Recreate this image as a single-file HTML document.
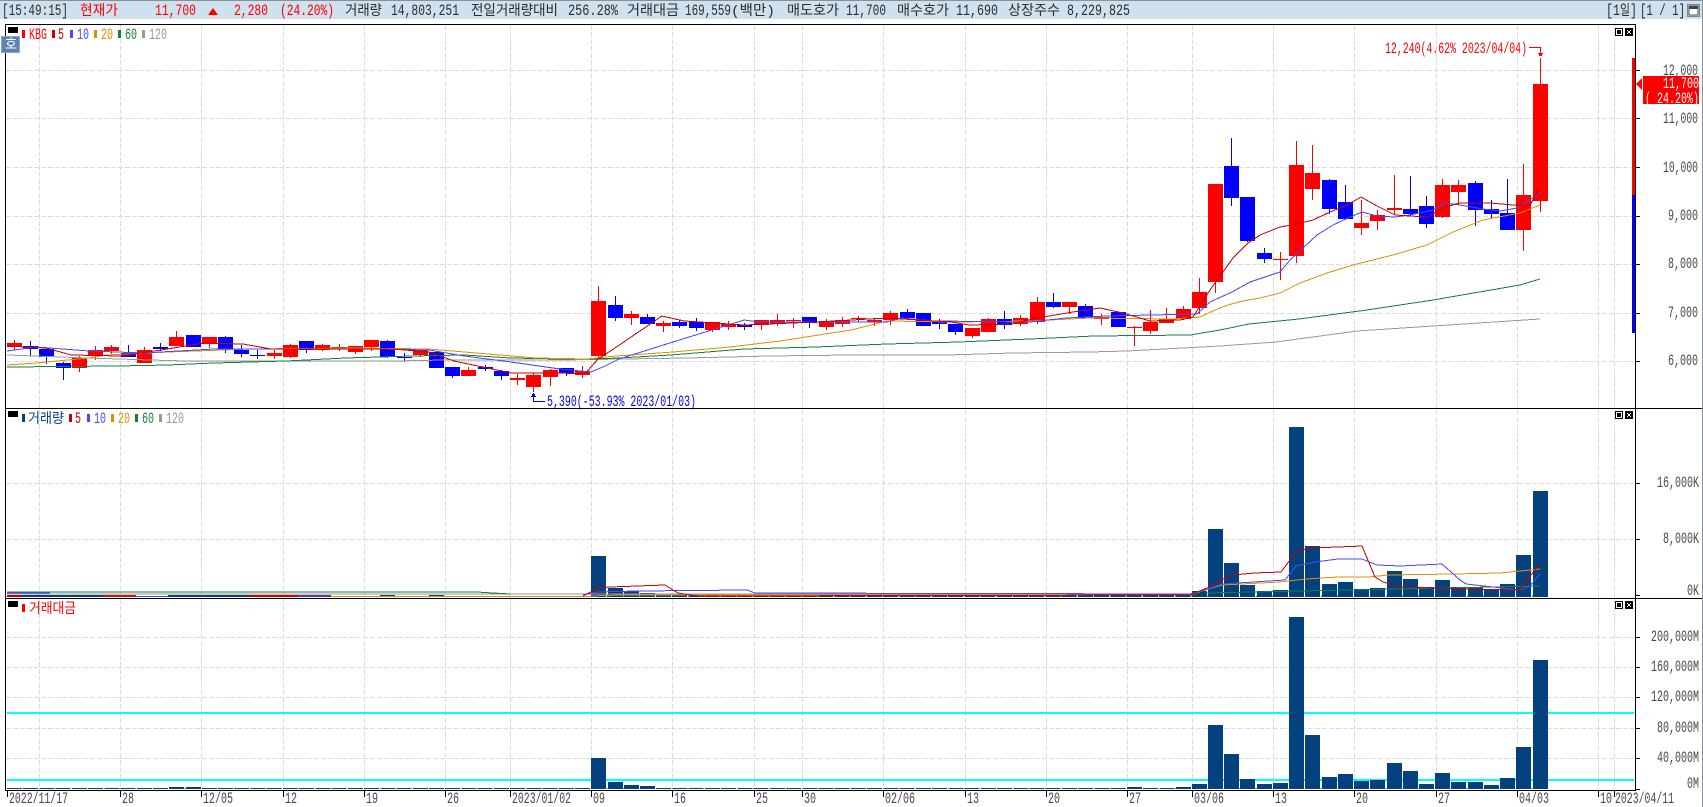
<!DOCTYPE html>
<html lang="ko"><head><meta charset="utf-8"><title>KBG</title>
<style>
html,body{margin:0;padding:0;background:#fff;width:1703px;height:807px;overflow:hidden}
svg{display:block}
text{font-family:"Liberation Mono","Noto Sans CJK KR",monospace;font-size:16px;fill:#444}
.k{font-family:"Liberation Sans","Noto Sans CJK KR",sans-serif;font-size:14px}
.h{font-size:16px;fill:#2c2c2c}
.a{fill:#484848}
.r{fill:#f00}
.g line{stroke:#dcdcdc;stroke-width:1;stroke-dasharray:5 2}
.m{fill:none;stroke-width:1}
</style></head><body>
<svg width="1703" height="807" viewBox="0 0 1703 807" shape-rendering="crispEdges">
<rect width="1703" height="807" fill="#fff"/>
<rect width="1703" height="19" fill="#cfe0ee"/>
<rect width="1703" height="1" fill="#87919b"/>
<rect x="1702" width="1" height="807" fill="#87919b"/>

<!-- grid -->
<g class="g">
<line x1="39.5" x2="39.5" y1="25" y2="790"/><line x1="120.5" x2="120.5" y1="25" y2="790"/><line x1="201.5" x2="201.5" y1="25" y2="790"/><line x1="283.5" x2="283.5" y1="25" y2="790"/><line x1="364.5" x2="364.5" y1="25" y2="790"/><line x1="445.5" x2="445.5" y1="25" y2="790"/><line x1="510.5" x2="510.5" y1="25" y2="790"/><line x1="591.5" x2="591.5" y1="25" y2="790"/><line x1="672.5" x2="672.5" y1="25" y2="790"/><line x1="754.5" x2="754.5" y1="25" y2="790"/><line x1="802.5" x2="802.5" y1="25" y2="790"/><line x1="883.5" x2="883.5" y1="25" y2="790"/><line x1="965.5" x2="965.5" y1="25" y2="790"/><line x1="1046.5" x2="1046.5" y1="25" y2="790"/><line x1="1127.5" x2="1127.5" y1="25" y2="790"/><line x1="1192.5" x2="1192.5" y1="25" y2="790"/><line x1="1273.5" x2="1273.5" y1="25" y2="790"/><line x1="1354.5" x2="1354.5" y1="25" y2="790"/><line x1="1436.5" x2="1436.5" y1="25" y2="790"/><line x1="1517.5" x2="1517.5" y1="25" y2="790"/><line x1="1598.5" x2="1598.5" y1="25" y2="790"/><line x1="1614.5" x2="1614.5" y1="25" y2="790"/>
<line x1="6" x2="1635" y1="70.5" y2="70.5"/><line x1="6" x2="1635" y1="118.5" y2="118.5"/><line x1="6" x2="1635" y1="167.5" y2="167.5"/><line x1="6" x2="1635" y1="216.5" y2="216.5"/><line x1="6" x2="1635" y1="264.5" y2="264.5"/><line x1="6" x2="1635" y1="313.5" y2="313.5"/><line x1="6" x2="1635" y1="361.5" y2="361.5"/>
<line x1="6" x2="1635" y1="483.5" y2="483.5"/><line x1="6" x2="1635" y1="539.5" y2="539.5"/>
<line x1="6" x2="1635" y1="637.5" y2="637.5"/><line x1="6" x2="1635" y1="667.5" y2="667.5"/><line x1="6" x2="1635" y1="697.5" y2="697.5"/><line x1="6" x2="1635" y1="728.5" y2="728.5"/><line x1="6" x2="1635" y1="758.5" y2="758.5"/>
</g>

<!-- candles red -->
<path fill="#f00" d="M7 343h15v4h-15zM14 340h1v10h-1zM72 358h15v10h-15zM79 356h1v16h-1zM88 350h15v5h-15zM95 346h1v14h-1zM104 347h15v4h-15zM111 345h1v9h-1zM137 350h15v13h-15zM144 347h1v16h-1zM169 337h15v9h-15zM176 331h1v15h-1zM202 337h15v7h-15zM209 337h1v11h-1zM267 353h15v3h-15zM274 350h1v9h-1zM283 345h15v12h-15zM290 344h1v14h-1zM315 345h15v5h-15zM322 344h1v7h-1zM332 347h15v2h-15zM339 344h1v7h-1zM348 346h15v6h-15zM355 346h1v8h-1zM364 340h15v7h-15zM371 340h1v11h-1zM413 350h15v5h-15zM420 350h1v7h-1zM461 370h15v6h-15zM468 367h1v9h-1zM510 378h15v2h-15zM517 374h1v11h-1zM526 375h15v12h-15zM533 373h1v19h-1zM543 370h15v7h-15zM550 369h1v17h-1zM575 371h15v4h-15zM582 366h1v12h-1zM591 301h15v55h-15zM598 286h1v74h-1zM624 314h15v4h-15zM631 311h1v14h-1zM656 323h15v3h-15zM663 321h1v11h-1zM705 322h15v8h-15zM712 322h1v10h-1zM721 324h15v3h-15zM728 321h1v9h-1zM754 320h15v5h-15zM761 320h1v10h-1zM770 320h15v4h-15zM777 314h1v12h-1zM786 320h15v1h-15zM793 318h1v10h-1zM819 321h15v6h-15zM826 319h1v11h-1zM835 320h15v4h-15zM842 317h1v10h-1zM851 318h15v1h-15zM858 316h1v6h-1zM867 320h15v2h-15zM874 318h1v8h-1zM883 313h15v7h-15zM890 311h1v14h-1zM965 328h15v8h-15zM972 328h1v10h-1zM981 319h15v13h-15zM988 318h1v14h-1zM1013 318h15v6h-15zM1020 315h1v11h-1zM1030 302h15v20h-15zM1037 297h1v27h-1zM1062 302h15v5h-15zM1069 302h1v12h-1zM1094 317h15v2h-15zM1101 314h1v11h-1zM1127 327h15v1h-15zM1134 326h1v20h-1zM1143 322h15v9h-15zM1150 310h1v24h-1zM1159 319h15v4h-15zM1166 308h1v15h-1zM1176 309h15v10h-15zM1183 306h1v14h-1zM1192 292h15v16h-15zM1199 278h1v36h-1zM1208 184h15v98h-15zM1215 184h1v109h-1zM1273 259h15v1h-15zM1280 252h1v28h-1zM1289 165h15v91h-15zM1296 141h1v122h-1zM1305 173h15v16h-15zM1312 145h1v55h-1zM1354 223h15v5h-15zM1361 200h1v35h-1zM1370 215h15v6h-15zM1377 210h1v20h-1zM1387 208h15v2h-15zM1394 175h1v40h-1zM1435 185h15v32h-15zM1442 179h1v39h-1zM1451 185h15v7h-15zM1458 180h1v25h-1zM1516 195h15v35h-15zM1523 164h1v87h-1zM1533 84h15v117h-15zM1540 58h1v154h-1z"/>
<!-- candles blue -->
<path fill="#00f" d="M23 346h15v3h-15zM30 341h1v15h-1zM39 349h15v8h-15zM46 348h1v16h-1zM56 363h15v5h-15zM63 362h1v18h-1zM121 353h15v4h-15zM128 345h1v12h-1zM153 347h15v2h-15zM160 343h1v8h-1zM186 335h15v12h-15zM218 337h15v13h-15zM225 336h1v17h-1zM234 350h15v4h-15zM241 345h1v12h-1zM250 355h15v1h-15zM257 350h1v9h-1zM299 341h15v9h-15zM306 341h1v12h-1zM380 341h15v16h-15zM387 340h1v18h-1zM397 357h15v1h-15zM404 353h1v9h-1zM429 352h15v16h-15zM445 367h15v9h-15zM452 367h1v11h-1zM478 367h15v2h-15zM485 365h1v6h-1zM494 371h15v5h-15zM501 370h1v10h-1zM559 368h15v5h-15zM566 368h1v8h-1zM608 305h15v13h-15zM615 296h1v25h-1zM640 317h15v7h-15zM647 314h1v10h-1zM672 322h15v4h-15zM679 320h1v8h-1zM689 322h15v6h-15zM696 318h1v13h-1zM737 325h15v2h-15zM744 323h1v7h-1zM802 317h15v6h-15zM809 317h1v11h-1zM900 312h15v6h-15zM907 309h1v11h-1zM916 313h15v13h-15zM932 322h15v2h-15zM939 319h1v10h-1zM948 324h15v8h-15zM955 324h1v11h-1zM997 319h15v6h-15zM1004 311h1v18h-1zM1046 302h15v5h-15zM1053 293h1v15h-1zM1078 306h15v12h-15zM1085 304h1v14h-1zM1111 312h15v15h-15zM1224 166h15v32h-15zM1231 138h1v68h-1zM1240 197h15v44h-15zM1247 197h1v45h-1zM1257 253h15v6h-15zM1264 248h1v15h-1zM1322 180h15v29h-15zM1329 179h1v35h-1zM1338 202h15v17h-15zM1345 185h1v34h-1zM1403 209h15v5h-15zM1410 176h1v40h-1zM1419 206h15v18h-15zM1426 196h1v32h-1zM1468 183h15v27h-15zM1475 181h1v45h-1zM1484 209h15v5h-15zM1491 200h1v19h-1zM1500 213h15v17h-15zM1507 179h1v51h-1z"/>

<!-- moving averages price -->
<polyline class="m" stroke="#999" points="7,355 89,358 150,360 186,361 393,361 446,360 560,360 687,358 769,356 851,355 948,355 1012,353 1090,352 1127,351 1220,346 1276,342 1357,331 1433,326 1540,319"/>
<polyline class="m" stroke="#14803a" points="7,367 118,366 168,365 214,363 286,361 346,358 411,356 464,355 511,358 560,359 591,359 619,358 671,355 744,349 816,347 887,344 959,342 1030,339 1094,336 1190,335 1220,330 1249,324 1299,319 1367,310 1433,300 1520,285 1540,279"/>
<polyline class="m" stroke="#e09000" points="7,365 36,363 89,358 107,355 168,352 250,349 357,348 429,349 500,355 536,358 587,359 616,356 673,352 730,347 780,341 851,330 887,321 955,322 1030,321 1090,318 1173,319 1200,317 1215,310 1228,305 1243,301 1260,298 1280,293 1300,283 1327,273 1353,265 1393,255 1427,245 1453,232 1483,220 1520,213 1540,205"/>
<polyline class="m" stroke="#4848ff" points="7,351 36,347 89,351 143,353 214,349 286,349 375,349 429,350 464,356 511,362 560,369 591,372 605,366 619,359 673,342 744,320 759,322 887,322 901,318 934,321 1030,322 1066,318 1107,316 1197,314 1210,302 1232,292 1250,282 1280,272 1290,260 1303,248 1317,235 1333,225 1350,217 1362,212 1377,216 1395,217 1410,215 1433,210 1445,203 1460,205 1483,209 1500,211 1517,208 1540,193"/>
<polyline class="m" stroke="#c80000" points="7,346 46,348 71,355 121,356 161,350 204,343 243,344 271,349 393,349 429,352 454,361 511,373 560,373 585,374 598,359 612,350 662,316 684,321 744,325 816,322 887,318 951,322 969,325 1012,324 1037,318 1073,312 1100,308 1123,313 1150,321 1180,320 1193,317 1210,290 1233,258 1248,243 1260,235 1280,227 1297,224 1313,220 1330,212 1347,205 1361,197 1377,206 1395,215 1410,216 1428,217 1443,208 1459,203 1490,203 1513,205 1530,205 1540,187"/>

<!-- price extreme labels -->
<text x="1385" y="53" class="r" textLength="142" lengthAdjust="spacingAndGlyphs">12,240(4.62% 2023/04/04)</text>
<rect x="1529" y="47" width="12" height="1" fill="#f00"/>
<rect x="1540" y="47" width="1" height="9" fill="#f00"/>
<rect x="1538" y="53" width="5" height="1" fill="#f00"/>
<rect x="1539" y="54" width="3" height="2" fill="#f00"/>
<text x="547" y="406" style="fill:#00f" textLength="149" lengthAdjust="spacingAndGlyphs">5,390(-53.93% 2023/01/03)</text>
<rect x="533" y="393" width="1" height="9" fill="#00f"/>
<rect x="533" y="401" width="12" height="1" fill="#00f"/>
<rect x="531" y="396" width="5" height="1" fill="#00f"/>
<rect x="532" y="394" width="3" height="2" fill="#00f"/>

<!-- volume panel -->
<rect x="7" y="595" width="15" height="2" fill="#c80000"/>
<rect x="22" y="595" width="81" height="2" fill="#03427f"/>
<rect x="103" y="595" width="33" height="2" fill="#d01010"/>
<rect x="136" y="596" width="32" height="1" fill="#4848ff"/>
<rect x="168" y="595" width="81" height="2" fill="#03427f"/>
<rect x="249" y="595" width="49" height="2" fill="#c80000"/>
<rect x="298" y="595" width="33" height="2" fill="#5a3a9a"/>
<rect x="331" y="596" width="259" height="1" fill="#e09000"/>
<rect x="380" y="595" width="15" height="1" fill="#03427f"/>
<rect x="429" y="595" width="15" height="1" fill="#03427f"/>
<line x1="591" x2="1548" y1="596" y2="596" stroke="#03427f" stroke-width="2" stroke-dasharray="15 1.23"/>
<path fill="#03427f" d="M591 556h15v41h-15zM608 588h15v9h-15zM624 591h15v6h-15zM640 593h15v4h-15zM689 594h15v3h-15zM1192 591h15v6h-15zM1208 529h15v68h-15zM1224 563h15v34h-15zM1240 585h15v12h-15zM1257 591h15v6h-15zM1273 590h15v7h-15zM1289 427h15v170h-15zM1305 546h15v51h-15zM1322 584h15v13h-15zM1338 582h15v15h-15zM1354 589h15v8h-15zM1370 588h15v9h-15zM1387 571h15v26h-15zM1403 579h15v18h-15zM1419 587h15v10h-15zM1435 580h15v17h-15zM1451 587h15v10h-15zM1468 587h15v10h-15zM1484 589h15v8h-15zM1500 584h15v13h-15zM1516 555h15v42h-15zM1533 491h15v106h-15z"/>
<polyline class="m" stroke="#999" points="7,594 1190,594"/>
<polyline class="m" stroke="#14803a" points="7,592 477,592 493,593 510,594"/>
<polyline class="m" stroke="#4848ff" points="7,593 50,593"/>
<polyline class="m" stroke="#14803a" points="1205,593 1540,586"/>
<polyline class="m" stroke="#e09000" points="590,596 620,595 1190,595 1205,590 1222,585 1280,582 1306,579 1338,577 1369,577 1388,575 1454,574 1500,573 1540,569"/>
<polyline class="m" stroke="#4848ff" points="583,595 597,592 638,591 747,590 755,593 1190,594 1205,590 1222,584 1285,580 1296,566 1315,562 1338,559 1362,559 1377,565 1400,566 1442,564 1460,580 1466,584 1520,590 1530,586 1540,574"/>
<polyline class="m" stroke="#c80000" points="583,596 598,588 610,587 665,585 673,590 678,593 690,595 700,596 1190,595 1207,588 1221,580 1233,575 1254,573 1281,572 1296,552 1310,548 1338,547 1362,546 1375,577 1383,582 1400,587 1510,590 1520,590 1527,580 1540,564"/>

<!-- value panel -->
<rect x="7" y="712" width="1627" height="2" fill="#0ff"/>
<rect x="7" y="779" width="1627" height="2" fill="#0ff"/>
<line x1="7" x2="1548" y1="788.5" y2="788.5" stroke="#03427f" stroke-width="1" stroke-dasharray="15 1.23"/>
<path fill="#03427f" d="M169 787h15v2h-15zM186 787h15v2h-15zM591 758h15v31h-15zM608 782h15v7h-15zM624 785h15v4h-15zM640 786h15v3h-15zM1127 787h15v2h-15zM1176 787h15v2h-15zM1192 784h15v5h-15zM1208 725h15v64h-15zM1224 754h15v35h-15zM1240 779h15v10h-15zM1257 784h15v5h-15zM1273 783h15v6h-15zM1289 617h15v172h-15zM1305 735h15v54h-15zM1322 777h15v12h-15zM1338 774h15v15h-15zM1354 781h15v8h-15zM1370 780h15v9h-15zM1387 763h15v26h-15zM1403 771h15v18h-15zM1419 784h15v5h-15zM1435 773h15v16h-15zM1451 782h15v7h-15zM1468 782h15v7h-15zM1484 785h15v4h-15zM1500 778h15v11h-15zM1516 747h15v42h-15zM1533 660h15v129h-15z"/>

<!-- frame -->
<g fill="#000">
<rect x="5" y="24" width="1631" height="1"/>
<rect x="5" y="24" width="1" height="767"/>
<rect x="1635" y="24" width="1" height="767"/>
<rect x="5" y="408" width="1697" height="1"/>
<rect x="5" y="598" width="1697" height="1"/>
<rect x="5" y="790" width="1631" height="1"/>
<path d="M1635 70h5v1h-5zM1635 118h5v1h-5zM1635 167h5v1h-5zM1635 216h5v1h-5zM1635 264h5v1h-5zM1635 313h5v1h-5zM1635 361h5v1h-5zM1635 483h5v1h-5zM1635 539h5v1h-5zM1635 595h5v1h-5zM1635 637h5v1h-5zM1635 667h5v1h-5zM1635 697h5v1h-5zM1635 728h5v1h-5zM1635 758h5v1h-5zM1635 789h5v1h-5z"/>
<path d="M7 791h1v6h-1zM120 791h1v6h-1zM201 791h1v6h-1zM283 791h1v6h-1zM364 791h1v6h-1zM445 791h1v6h-1zM510 791h1v6h-1zM591 791h1v6h-1zM672 791h1v6h-1zM754 791h1v6h-1zM802 791h1v6h-1zM883 791h1v6h-1zM965 791h1v6h-1zM1046 791h1v6h-1zM1127 791h1v6h-1zM1192 791h1v6h-1zM1273 791h1v6h-1zM1354 791h1v6h-1zM1436 791h1v6h-1zM1517 791h1v6h-1zM1598 791h1v6h-1zM1614 791h1v6h-1z"/>
<rect x="8" y="27" width="10" height="6"/><rect x="8" y="411" width="10" height="6"/><rect x="8" y="601" width="10" height="6"/>
<path d="M1615 28h8v8h-8zM1625 28h8v8h-8zM1615 411h8v8h-8zM1625 411h8v8h-8zM1615 601h8v8h-8zM1625 601h8v8h-8z"/>
</g>
<path fill="#fff" d="M1616 29h6v1h-6zM1616 34h6v1h-6zM1616 29h1v6h-1zM1621 29h1v6h-1zM1616 412h6v1h-6zM1616 417h6v1h-6zM1616 412h1v6h-1zM1621 412h1v6h-1zM1616 602h6v1h-6zM1616 607h6v1h-6zM1616 602h1v6h-1zM1621 602h1v6h-1zM1627 30h1v1h-1zM1630 30h1v1h-1zM1628 31h2v2h-2zM1627 33h1v1h-1zM1630 33h1v1h-1zM1627 413h1v1h-1zM1630 413h1v1h-1zM1628 414h2v2h-2zM1627 416h1v1h-1zM1630 416h1v1h-1zM1627 603h1v1h-1zM1630 603h1v1h-1zM1628 604h2v2h-2zM1627 606h1v1h-1zM1630 606h1v1h-1z"/>

<!-- right side indicator -->
<rect x="1632" y="58" width="3" height="137" fill="#f00"/>
<rect x="1632" y="195" width="3" height="138" fill="#00f"/>
<path d="M1636 84l6-6v12z" fill="#f00" shape-rendering="auto"/>
<rect x="1643" y="76" width="56" height="28" fill="#f00"/>
<text x="1663" y="88" style="fill:#fff" textLength="36" lengthAdjust="spacingAndGlyphs">11,700</text>
<text x="1645" y="103" style="fill:#fff" textLength="54" lengthAdjust="spacingAndGlyphs">( 24.20%)</text>

<!-- axis labels -->
<text class="a" x="1663" y="75" textLength="35" lengthAdjust="spacingAndGlyphs">12,000</text>
<text class="a" x="1663" y="123" textLength="35" lengthAdjust="spacingAndGlyphs">11,000</text>
<text class="a" x="1663" y="172" textLength="35" lengthAdjust="spacingAndGlyphs">10,000</text>
<text class="a" x="1668" y="220" textLength="30" lengthAdjust="spacingAndGlyphs">9,000</text>
<text class="a" x="1668" y="268" textLength="30" lengthAdjust="spacingAndGlyphs">8,000</text>
<text class="a" x="1668" y="317" textLength="30" lengthAdjust="spacingAndGlyphs">7,000</text>
<text class="a" x="1668" y="365" textLength="30" lengthAdjust="spacingAndGlyphs">6,000</text>
<text class="a" x="1657" y="487" textLength="42" lengthAdjust="spacingAndGlyphs">16,000K</text>
<text class="a" x="1663" y="543" textLength="36" lengthAdjust="spacingAndGlyphs">8,000K</text>
<text class="a" x="1687" y="595" textLength="12" lengthAdjust="spacingAndGlyphs">0K</text>
<text class="a" x="1651" y="641" textLength="48" lengthAdjust="spacingAndGlyphs">200,000M</text>
<text class="a" x="1651" y="671" textLength="48" lengthAdjust="spacingAndGlyphs">160,000M</text>
<text class="a" x="1651" y="701" textLength="48" lengthAdjust="spacingAndGlyphs">120,000M</text>
<text class="a" x="1657" y="732" textLength="42" lengthAdjust="spacingAndGlyphs">80,000M</text>
<text class="a" x="1657" y="762" textLength="42" lengthAdjust="spacingAndGlyphs">40,000M</text>
<text class="a" x="1687" y="788" textLength="12" lengthAdjust="spacingAndGlyphs">0M</text>
<text class="a" x="9" y="803" textLength="59" lengthAdjust="spacingAndGlyphs">2022/11/17</text>
<text class="a" x="122" y="803" textLength="12" lengthAdjust="spacingAndGlyphs">28</text>
<text class="a" x="203" y="803" textLength="30" lengthAdjust="spacingAndGlyphs">12/05</text>
<text class="a" x="285" y="803" textLength="12" lengthAdjust="spacingAndGlyphs">12</text>
<text class="a" x="366" y="803" textLength="12" lengthAdjust="spacingAndGlyphs">19</text>
<text class="a" x="447" y="803" textLength="12" lengthAdjust="spacingAndGlyphs">26</text>
<text class="a" x="512" y="803" textLength="59" lengthAdjust="spacingAndGlyphs">2023/01/02</text>
<text class="a" x="593" y="803" textLength="12" lengthAdjust="spacingAndGlyphs">09</text>
<text class="a" x="674" y="803" textLength="12" lengthAdjust="spacingAndGlyphs">16</text>
<text class="a" x="756" y="803" textLength="12" lengthAdjust="spacingAndGlyphs">25</text>
<text class="a" x="804" y="803" textLength="12" lengthAdjust="spacingAndGlyphs">30</text>
<text class="a" x="885" y="803" textLength="30" lengthAdjust="spacingAndGlyphs">02/06</text>
<text class="a" x="967" y="803" textLength="12" lengthAdjust="spacingAndGlyphs">13</text>
<text class="a" x="1048" y="803" textLength="12" lengthAdjust="spacingAndGlyphs">20</text>
<text class="a" x="1129" y="803" textLength="12" lengthAdjust="spacingAndGlyphs">27</text>
<text class="a" x="1194" y="803" textLength="30" lengthAdjust="spacingAndGlyphs">03/06</text>
<text class="a" x="1275" y="803" textLength="12" lengthAdjust="spacingAndGlyphs">13</text>
<text class="a" x="1356" y="803" textLength="12" lengthAdjust="spacingAndGlyphs">20</text>
<text class="a" x="1438" y="803" textLength="12" lengthAdjust="spacingAndGlyphs">27</text>
<text class="a" x="1519" y="803" textLength="30" lengthAdjust="spacingAndGlyphs">04/03</text>
<text class="a" x="1600" y="803" textLength="12" lengthAdjust="spacingAndGlyphs">10</text>
<text class="a" x="1615" y="803" textLength="59" lengthAdjust="spacingAndGlyphs">2023/04/11</text>

<!-- legends -->
<path fill="#f00" d="M22 30h3v8h-3zM22 604h3v8h-3z"/>
<rect x="52" y="30" width="3" height="8" fill="#c80000"/><rect x="70" y="30" width="3" height="8" fill="#4848ff"/><rect x="94" y="30" width="3" height="8" fill="#e09000"/><rect x="118" y="30" width="3" height="8" fill="#14803a"/><rect x="142" y="30" width="3" height="8" fill="#999"/>
<text x="29" y="39" class="r" textLength="18" lengthAdjust="spacingAndGlyphs">KBG</text>
<text x="58" y="39" style="fill:#c80000" textLength="6" lengthAdjust="spacingAndGlyphs">5</text>
<text x="77" y="39" style="fill:#4848ff" textLength="12" lengthAdjust="spacingAndGlyphs">10</text>
<text x="101" y="39" style="fill:#e09000" textLength="12" lengthAdjust="spacingAndGlyphs">20</text>
<text x="125" y="39" style="fill:#14803a" textLength="12" lengthAdjust="spacingAndGlyphs">60</text>
<text x="149" y="39" style="fill:#999" textLength="18" lengthAdjust="spacingAndGlyphs">120</text>

<rect x="22" y="414" width="3" height="8" fill="#03427f"/><rect x="69" y="414" width="3" height="8" fill="#c80000"/><rect x="87" y="414" width="3" height="8" fill="#4848ff"/><rect x="111" y="414" width="3" height="8" fill="#e09000"/><rect x="135" y="414" width="3" height="8" fill="#14803a"/><rect x="159" y="414" width="3" height="8" fill="#999"/>
<text x="28" y="423" class="k" style="fill:#03427f" textLength="36" lengthAdjust="spacingAndGlyphs">거래량</text>
<text x="75" y="423" style="fill:#c80000" textLength="6" lengthAdjust="spacingAndGlyphs">5</text>
<text x="94" y="423" style="fill:#4848ff" textLength="12" lengthAdjust="spacingAndGlyphs">10</text>
<text x="118" y="423" style="fill:#e09000" textLength="12" lengthAdjust="spacingAndGlyphs">20</text>
<text x="142" y="423" style="fill:#14803a" textLength="12" lengthAdjust="spacingAndGlyphs">60</text>
<text x="166" y="423" style="fill:#999" textLength="18" lengthAdjust="spacingAndGlyphs">120</text>
<text x="29" y="613" class="k r" textLength="47" lengthAdjust="spacingAndGlyphs">거래대금</text>

<!-- ho button -->
<rect x="1.5" y="36.5" width="18" height="16" fill="#5b82b0" stroke="#8aa6c6"/>
<text x="5" y="49" class="k" style="fill:#fff" textLength="12" lengthAdjust="spacingAndGlyphs">호</text>

<!-- header -->
<text class="h" x="2" y="15" textLength="66" lengthAdjust="spacingAndGlyphs">[15:49:15]</text>
<text class="k r" x="80" y="15" textLength="38" lengthAdjust="spacingAndGlyphs">현재가</text>
<text class="h r" x="155" y="15" textLength="41" lengthAdjust="spacingAndGlyphs">11,700</text>
<path d="M213 8l5 7h-10z" fill="#f00" shape-rendering="auto"/>
<text class="h r" x="234" y="15" textLength="34" lengthAdjust="spacingAndGlyphs">2,280</text>
<text class="h r" x="280" y="15" textLength="54" lengthAdjust="spacingAndGlyphs">(24.20%)</text>
<text class="k" style="fill:#2c2c2c" x="345" y="15" textLength="37" lengthAdjust="spacingAndGlyphs">거래량</text>
<text class="h" x="391" y="15" textLength="68" lengthAdjust="spacingAndGlyphs">14,803,251</text>
<text class="k" style="fill:#2c2c2c" x="471" y="15" textLength="87" lengthAdjust="spacingAndGlyphs">전일거래량대비</text>
<text class="h" x="568" y="15" textLength="50" lengthAdjust="spacingAndGlyphs">256.28%</text>
<text class="k" style="fill:#2c2c2c" x="627" y="15" textLength="52" lengthAdjust="spacingAndGlyphs">거래대금</text>
<text class="h" x="685" y="15" textLength="46" lengthAdjust="spacingAndGlyphs">169,559</text>
<text x="731" y="15" style="font-size:14px;fill:#2c2c2c" textLength="44" lengthAdjust="spacingAndGlyphs">(백만)</text>
<text class="k" style="fill:#2c2c2c" x="787" y="15" textLength="52" lengthAdjust="spacingAndGlyphs">매도호가</text>
<text class="h" x="846" y="15" textLength="40" lengthAdjust="spacingAndGlyphs">11,700</text>
<text class="k" style="fill:#2c2c2c" x="897" y="15" textLength="52" lengthAdjust="spacingAndGlyphs">매수호가</text>
<text class="h" x="956" y="15" textLength="42" lengthAdjust="spacingAndGlyphs">11,690</text>
<text class="k" style="fill:#2c2c2c" x="1008" y="15" textLength="52" lengthAdjust="spacingAndGlyphs">상장주수</text>
<text class="h" x="1067" y="15" textLength="63" lengthAdjust="spacingAndGlyphs">8,229,825</text>
<text class="h" x="1606" y="15" textLength="7" lengthAdjust="spacingAndGlyphs">[</text>
<text class="h" x="1613" y="15" textLength="7" lengthAdjust="spacingAndGlyphs">1</text>
<text class="k" style="fill:#2c2c2c" x="1620" y="15" textLength="10" lengthAdjust="spacingAndGlyphs">일</text>
<text class="h" x="1630" y="15" textLength="7" lengthAdjust="spacingAndGlyphs">]</text>
<text class="h" x="1640" y="15" textLength="45" lengthAdjust="spacingAndGlyphs">[1 / 1]</text>
<rect x="1687.5" y="4.5" width="12" height="12" fill="#cdd6de" stroke="#7c8690"/>
<rect x="1689" y="6" width="9" height="9" fill="#fff" stroke="#555" stroke-width="1"/>
<rect x="1689" y="6" width="9" height="3" fill="#444"/>
</svg>
</body></html>
